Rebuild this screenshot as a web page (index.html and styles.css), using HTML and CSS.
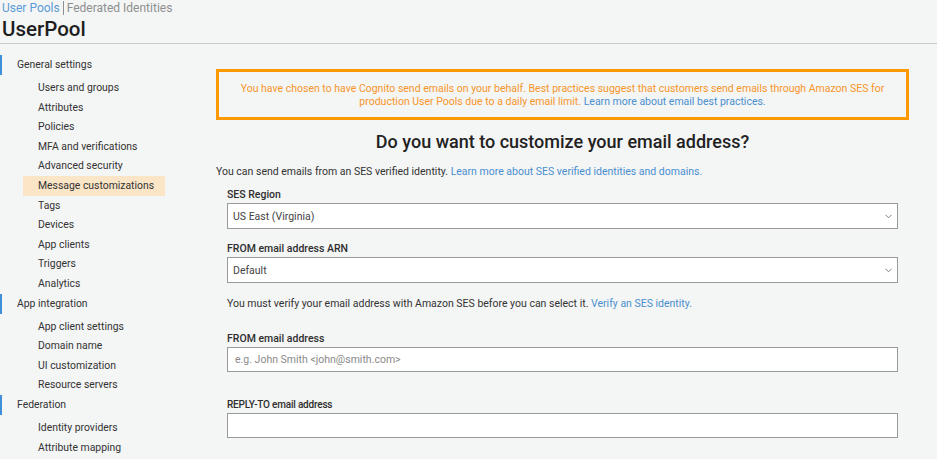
FILE: index.html
```html
<!DOCTYPE html>
<html>
<head>
<meta charset="utf-8">
<link rel="stylesheet" href="styles.css">
</head>
<body>
<header class="top">
  <nav class="crumbs"><a class="crumb-active">User Pools</a><span class="crumb-sep"></span><a class="crumb">Federated Identities</a></nav>
  <h1 class="pool-title">UserPool</h1>
</header>
<div class="layout">
  <aside class="sidebar">
    <div class="group-head">General settings</div>
    <ul class="items">
      <li>Users and groups</li>
      <li>Attributes</li>
      <li>Policies</li>
      <li>MFA and verifications</li>
      <li>Advanced security</li>
      <li class="active">Message customizations</li>
      <li>Tags</li>
      <li>Devices</li>
      <li>App clients</li>
      <li>Triggers</li>
      <li>Analytics</li>
    </ul>
    <div class="group-head">App integration</div>
    <ul class="items">
      <li>App client settings</li>
      <li>Domain name</li>
      <li>UI customization</li>
      <li>Resource servers</li>
    </ul>
    <div class="group-head">Federation</div>
    <ul class="items">
      <li>Identity providers</li>
      <li>Attribute mapping</li>
    </ul>
  </aside>
  <main class="main">
    <div class="warning"><span class="wline">You have chosen to have Cognito send emails on your behalf. Best practices suggest that customers send emails through Amazon SES for</span><span class="wline">production User Pools due to a daily email limit. <a class="link">Learn more about email best practices.</a></span></div>
    <h2 class="question">Do you want to customize your email address?</h2>
    <p class="intro">You can send emails from an SES verified identity. <a class="link">Learn more about SES verified identities and domains.</a></p>
    <div class="form">
      <label class="label">SES Region</label>
      <div class="select"><span>US East (Virginia)</span><svg class="chev" width="7" height="5" viewBox="0 0 7 5"><path d="M0.5 0.8 L3.5 3.8 L6.5 0.8" fill="none" stroke="#8a7a70" stroke-width="1"/></svg></div>
      <label class="label gap">FROM email address ARN</label>
      <div class="select"><span>Default</span><svg class="chev" width="7" height="5" viewBox="0 0 7 5"><path d="M0.5 0.8 L3.5 3.8 L6.5 0.8" fill="none" stroke="#8a7a70" stroke-width="1"/></svg></div>
      <p class="note">You must verify your email address with Amazon SES before you can select it. <a class="link">Verify an SES identity.</a></p>
      <label class="label gap-from">FROM email address</label>
      <div class="input placeholder">e.g. John Smith &lt;john@smith.com&gt;</div>
      <label class="label gap-reply narrow">REPLY-TO email address</label>
      <div class="input"></div>
    </div>
  </main>
</div>
</body>
</html>
```
FILE: styles.css
```css
* { box-sizing: border-box; }
html, body { margin: 0; padding: 0; }
body {
  background: #f4f5f5;
  font-family: Roboto, "Liberation Sans", sans-serif;
  color: #333;
  width: 937px;
  height: 459px;
  overflow: hidden;
}
.top {
  padding: 0 2px;
  border-bottom: 1px solid #c9cbca;
  height: 44px;
}
.crumbs {
  display: flex;
  align-items: center;
  height: 15px;
  font-size: 12px;
}
.crumb-active { color: #5b9bd6; }
.crumb { color: #8e9090; }
.crumb-sep {
  display: inline-block;
  width: 1px;
  height: 14px;
  background: #8e9090;
  margin: 0 3px 0 3px;
}
.pool-title {
  margin: 0;
  font-size: 20.5px;
  font-weight: 500;
  line-height: 28px;
  color: #1e1e1e;
}
.layout {
  display: grid;
  grid-template-columns: 216px 693px;
}
.sidebar {
  padding-top: 11px;
  font-size: 10.4px;
  color: #333;
}
.group-head {
  height: 20px;
  line-height: 20px;
  border-left: 2px solid #3d8fd8;
  padding-left: 15px;
  margin-bottom: 3px;
}
.items {
  list-style: none;
  margin: 0;
  padding: 0;
}
.items li {
  height: 19.6px;
  line-height: 19.6px;
  padding-left: 38px;
}
.items li.active {
  margin-left: 23px;
  width: 142px;
  padding-left: 15px;
  background: #fae5c7;
}
.main {
  padding-top: 25px;
  font-size: 10.5px;
}
.link { color: #4a90cf; }
.warning {
  border: 3px solid #ff9900;
  padding: 10px 10px 8px;
  text-align: center;
  line-height: 13px;
  color: #f7962a;
  height: 51px;
  display: flex;
  flex-direction: column;
  align-items: center;
}
.wline { white-space: nowrap; }
.question {
  margin: 10px 0 0;
  text-align: center;
  font-size: 18px;
  font-weight: 500;
  line-height: 24px;
  color: #222;
}
.intro {
  margin: 11px 0 0;
  line-height: 14px;
}
.form {
  padding: 8px 11px 0;
  display: flex;
  flex-direction: column;
}
.label {
  font-weight: 500;
  line-height: 16px;
  color: #2e2e2e;
}
.label.gap { margin-top: 12px; }
.label.gap-from { margin-top: 20px; }
.label.gap-reply { margin-top: 25px; }
.label.narrow { font-size: 10px; letter-spacing: -0.2px; }
.select {
  margin-top: 0;
  height: 26px;
  border: 1px solid #999b9b;
  background: #fff;
  display: flex;
  align-items: center;
  justify-content: space-between;
  padding: 0 5px 0 5px;
  color: #444;
}
.chev { margin-top: 1px; }
.note {
  margin: 14px 0 0;
  line-height: 14px;
}
.input {
  margin-top: 0;
  height: 25px;
  border: 1px solid #999b9b;
  background: #fff;
  display: flex;
  align-items: center;
  padding: 0 7px;
}
.placeholder { color: #8a8a8a; }
```
